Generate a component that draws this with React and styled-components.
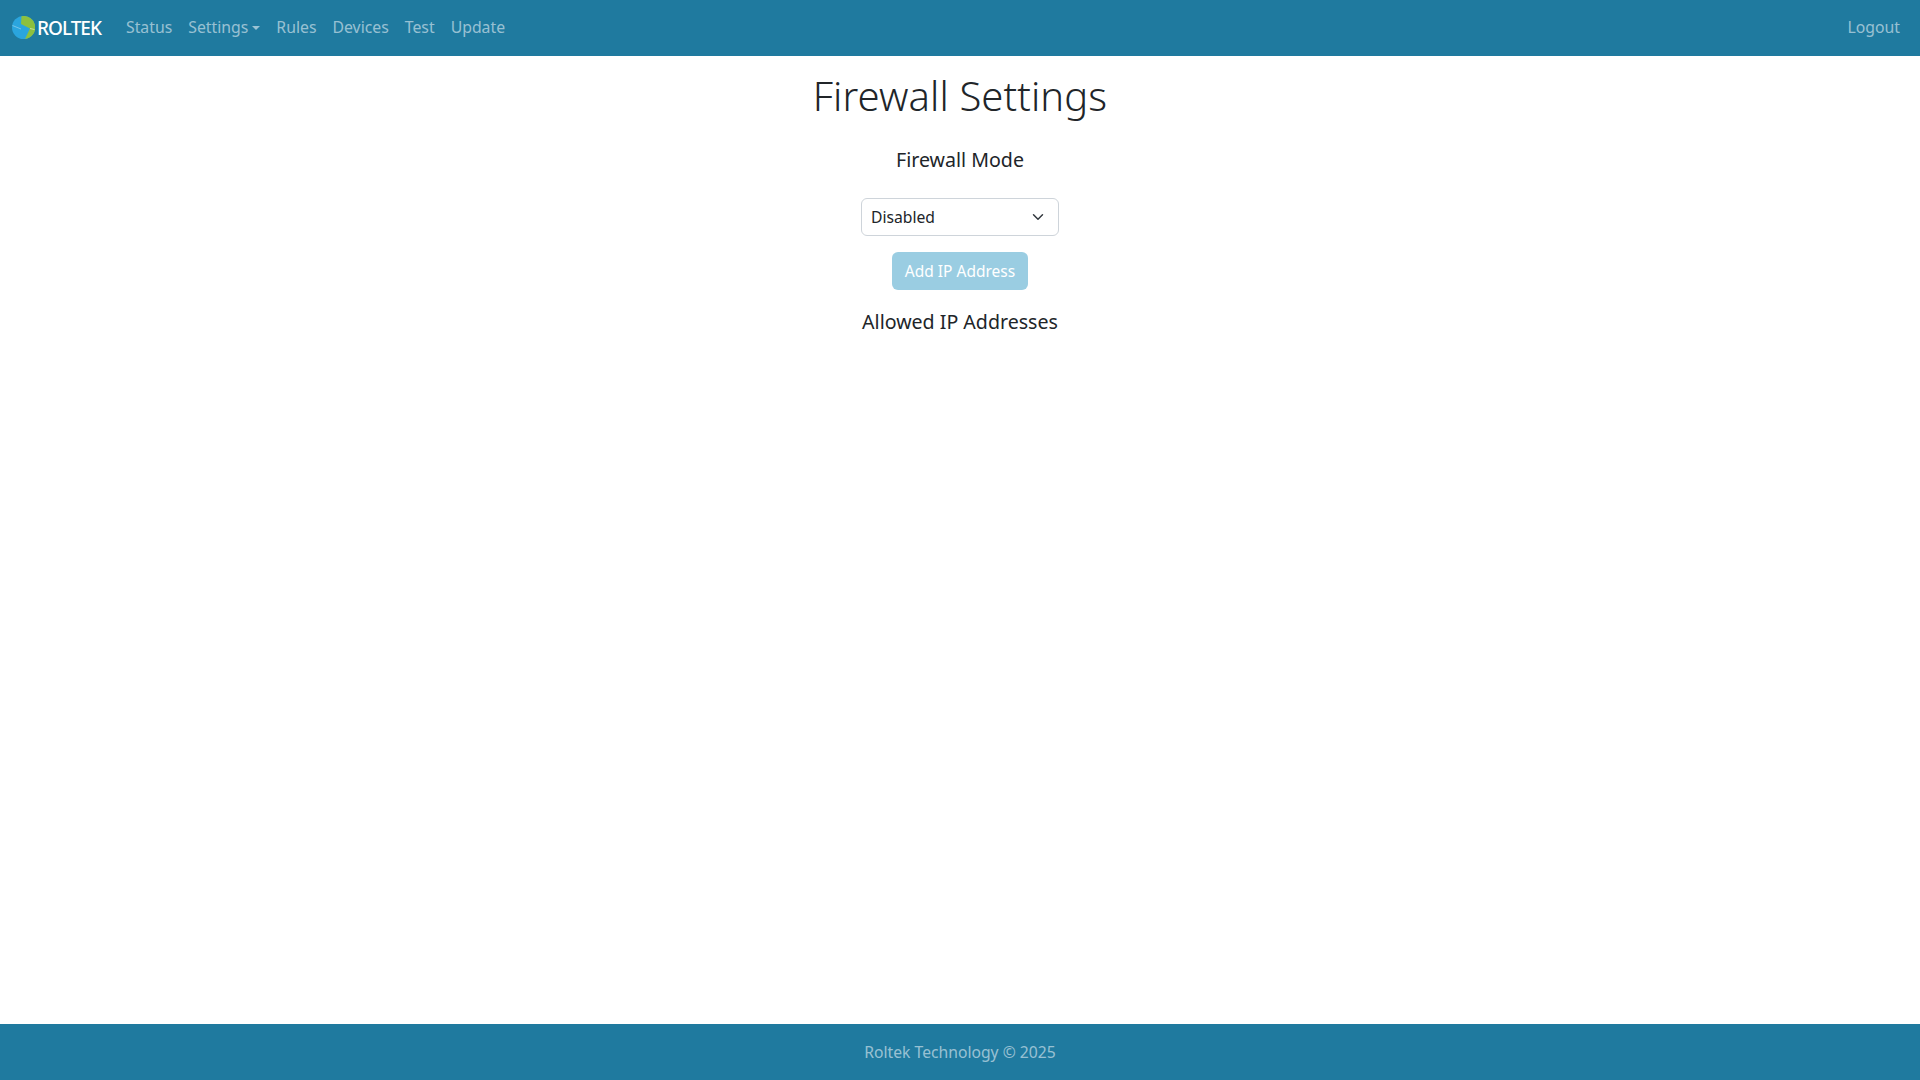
import React from 'react';
import styled, {createGlobalStyle} from 'styled-components';

const GlobalStyle = createGlobalStyle`
    * { box-sizing: border-box; }
    html, body { margin: 0; padding: 0; }
    body {
        font-family: "Noto Sans", "Open Sans", sans-serif;
        font-size: 16px;
        line-height: 1.5;
        color: #212529;
        background: #fff;
    }
`
const Page = styled.div`
    min-height: 1080px;
    display: flex;
    flex-direction: column;
`
const Navbar = styled.nav`
    height: 56px;
    flex: none;
    background-color: #1f7a9f;
    display: flex;
    align-items: center;
    padding: 0 12px;
`
const Brand = styled.a`
    display: flex;
    align-items: center;
    gap: 2px;
    margin-right: 17px;
    color: #fff;
    font-size: 19px;
    font-weight: 500;
    letter-spacing: -1px;
    text-decoration: none;
`
const LogoMark = styled.svg`
    margin-bottom: 2px;
`
const NavList = styled.div`
    display: flex;
    align-items: center;
    flex: 1;
`
const NavLink = styled.a`
    padding: 8px;
    color: rgba(255, 255, 255, 0.55);
    font-size: 15.8px;
    text-decoration: none;
    white-space: nowrap;
    margin-left: ${props => props.$push ? 'auto' : '0'};
`
const Caret = styled.span`
    display: inline-block;
    margin-left: 4px;
    vertical-align: 3px;
    border-top: 4.8px solid;
    border-right: 4.8px solid transparent;
    border-left: 4.8px solid transparent;
`
const Main = styled.main`
    flex: 1;
    display: flex;
    flex-direction: column;
    align-items: center;
    padding-top: 16px;
`
const Title = styled.h1`
    margin: 0 0 28px;
    font-size: 40px;
    line-height: 48px;
    font-weight: 300;
    letter-spacing: 0.1px;
`
const SectionTitle = styled.h5`
    margin: 0 0 ${props => props.$gap || 0}px;
    font-size: 19.6px;
    line-height: 24px;
    font-weight: 400;
`
const ModeSelect = styled.select`
    display: block;
    width: 198px;
    height: 38px;
    padding: 0 36px 0 9px;
    font-family: inherit;
    font-size: 15.7px;
    color: #212529;
    background-color: #fff;
    background-image: url("data:image/svg+xml,%3csvg xmlns='http://www.w3.org/2000/svg' viewBox='0 0 16 16'%3e%3cpath fill='none' stroke='%23343a40' stroke-linecap='round' stroke-linejoin='round' stroke-width='2' d='m2 5 6 6 6-6'/%3e%3c/svg%3e");
    background-repeat: no-repeat;
    background-position: right 12px center;
    background-size: 16px 12px;
    border: 1px solid #ced4da;
    border-radius: 6px;
    appearance: none;
    margin-bottom: 16px;
`
const AddButton = styled.button`
    width: 136px;
    height: 38px;
    padding: 0;
    margin-bottom: 20px;
    font-family: inherit;
    font-size: 15.5px;
    color: #fff;
    background-color: #9acde2;
    border: 0;
    border-radius: 6px;
`
const Footer = styled.footer`
    height: 56px;
    flex: none;
    padding-top: 1px;
    background-color: #1f7a9f;
    display: flex;
    align-items: center;
    justify-content: center;
    color: rgba(255, 255, 255, 0.55);
    font-size: 15.7px;
`

const Logo = () => (
    <LogoMark width="23" height="23" viewBox="0 0 46 46">
        <circle cx="23" cy="23" r="23" fill="#2aa5de" />
        <path d="M19 .4 A23 23 0 1 1 26 45.8 L36 25 L18 16 Z" fill="#8dc03f" />
        <path d="M1 19 L18 26" fill="none" stroke="#8fd0ec" strokeWidth="1.5" />
        <path d="M45 27 L36 25" fill="none" stroke="#dcebbd" strokeWidth="1.5" />
    </LogoMark>
)

const links = ['Status', 'Settings', 'Rules', 'Devices', 'Test', 'Update']

const App = () => {
    return (
        <Page>
            <GlobalStyle />
            <Navbar>
                <Brand href="#"><Logo />ROLTEK</Brand>
                <NavList>
                    {links.map(link => (
                        <NavLink href="#" key={link}>
                            {link}{link === 'Settings' && <Caret />}
                        </NavLink>
                    ))}
                    <NavLink href="#" $push>Logout</NavLink>
                </NavList>
            </Navbar>
            <Main>
                <Title>Firewall Settings</Title>
                <SectionTitle $gap={26}>Firewall Mode</SectionTitle>
                <ModeSelect defaultValue="disabled">
                    <option value="disabled">Disabled</option>
                    <option value="whitelist">Whitelist</option>
                </ModeSelect>
                <AddButton disabled>Add IP Address</AddButton>
                <SectionTitle>Allowed IP Addresses</SectionTitle>
            </Main>
            <Footer>Roltek Technology © 2025</Footer>
        </Page>
    )
}

export default App
